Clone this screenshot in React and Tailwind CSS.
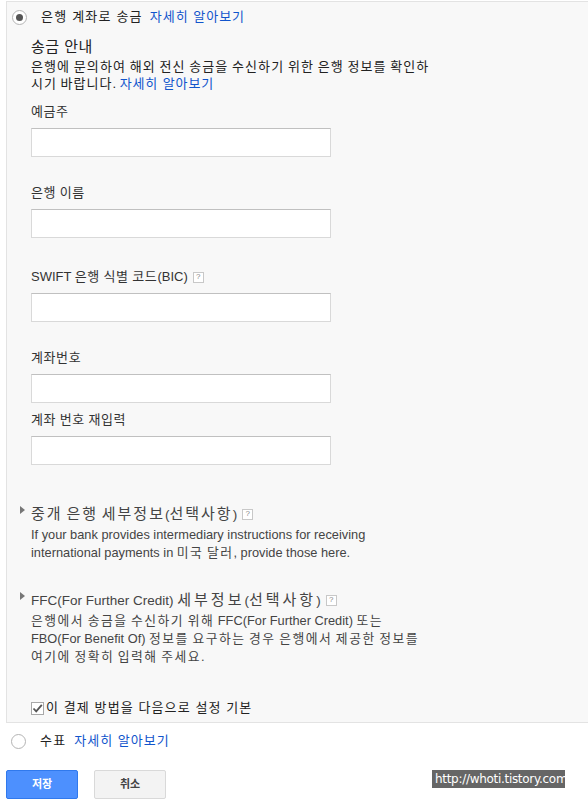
import { useState } from 'react';

const font = "font-['Liberation_Sans','Noto_Sans_CJK_KR',sans-serif]";

// wraps hangul runs so they get the wider spacing of the original font
const Kr = ({ text, cls }) =>
    text.split(/([가-힣]+)/).map((part, i) =>
        /[가-힣]/.test(part) ? <span key={i} className={cls}>{part}</span> : part
    );

const Help = () => (
    <span className="inline-flex items-center justify-center w-[11px] h-[11px] border border-[#c8c8c8] bg-white text-[8px] leading-none text-[#888] ml-[5px]">?</span>
);

const Field = ({ label, help, className = '' }) => (
    <div className={className}>
        <div className="text-[13px] text-[#333] leading-[16px] h-[16px] flex items-center">
            <span><Kr text={label} cls="tracking-[0.6px]" /></span>
            {help && <Help />}
        </div>
        <input type="text" className="mt-[8px] block w-[300px] h-[29px] bg-white border border-[#d9d9d9] border-t-[#c0c0c0] outline-none" />
    </div>
);

const Radio = ({ checked }) => (
    <span className="w-[15px] h-[15px] rounded-full border border-[#b4b4b4] bg-white flex items-center justify-center shrink-0">
        {checked && <span className="w-[7px] h-[7px] rounded-full bg-[#555]" />}
    </span>
);

const Section = ({ title, titleCls, lines, className = '' }) => (
    <div className={className}>
        <div className="flex items-center text-[13.5px] text-[#444] leading-[18px] h-[18px]">
            <span className="w-0 h-0 border-y-[4px] border-y-transparent border-l-[5px] border-l-[#777] -ml-[11px] mr-[6px] -mt-[8px]" />
            <span><Kr text={title} cls={titleCls} /></span>
            <Help />
        </div>
        <div className="mt-[3px] text-[12.8px] text-[#444] leading-[18px]">
            {lines.map((l, i) => (
                <div key={i}><Kr text={l} cls="tracking-[1.5px]" /></div>
            ))}
        </div>
    </div>
);

const App = () => {
    const [isDefault, setIsDefault] = useState(true);

    return (
        <div className={`${font} w-[588px] h-[804px] bg-white relative overflow-hidden`}>
            <div className="ml-[6px] mt-[1px] bg-[#f8f8f8] border-l border-y border-[#e3e3e3] pb-[6px]">
                <div className="flex items-center h-[30px] pl-[5px]">
                    <Radio checked />
                    <span className="ml-[14px] text-[13px] text-[#222] tracking-[1.2px]">은행 계좌로 송금</span>
                    <a className="ml-[7px] text-[13px] text-[#1155cc] tracking-[1px]">자세히 알아보기</a>
                </div>

                <div className="pl-[24px]">
                    <div className="text-[15px] text-[#222] leading-[18px] mt-[6px] tracking-[0.5px]">송금 안내</div>
                    <div className="text-[13px] text-[#222] leading-[17px] mt-[2px] w-[420px]">
                        <div><Kr text="은행에 문의하여 해외 전신 송금을 수신하기 위한 은행 정보를 확인하" cls="tracking-[1.1px]" /></div>
                        <div>
                            <Kr text="시기 바랍니다. " cls="tracking-[1px]" />
                            <a className="text-[#1155cc] tracking-[0.9px]">자세히 알아보기</a>
                        </div>
                    </div>

                    <Field label="예금주" className="mt-[12px]" />
                    <Field label="은행 이름" className="mt-[28px]" />
                    <Field label="SWIFT 은행 식별 코드(BIC)" help className="mt-[31px]" />
                    <Field label="계좌번호" className="mt-[28px]" />
                    <Field label="계좌 번호 재입력" className="mt-[9px]" />

                    <Section
                        title="중개 은행 세부정보(선택사항)"
                        titleCls="text-[15px] tracking-[2px]"
                        className="mt-[40px]"
                        lines={[
                            'If your bank provides intermediary instructions for receiving',
                            'international payments in 미국 달러, provide those here.',
                        ]}
                    />

                    <Section
                        title="FFC(For Further Credit) 세부정보(선택사항)"
                        titleCls="text-[15px] tracking-[3px]"
                        className="mt-[29px]"
                        lines={[
                            '은행에서 송금을 수신하기 위해 FFC(For Further Credit) 또는',
                            'FBO(For Benefit Of) 정보를 요구하는 경우 은행에서 제공한 정보를',
                            '여기에 정확히 입력해 주세요.',
                        ]}
                    />

                    <label className="flex items-center h-[16px] mt-[34px] text-[13px] text-[#222] cursor-pointer">
                        <span
                            onClick={() => setIsDefault(!isDefault)}
                            className="w-[13px] h-[13px] border border-[#a8a8a8] bg-white flex items-center justify-center mr-[2px]"
                        >
                            {isDefault && (
                                <svg width="11" height="11" viewBox="0 0 11 11">
                                    <path d="M1.5 5.5 L4.2 8.4 L9.8 1.8" fill="none" stroke="#555" strokeWidth="1.8" />
                                </svg>
                            )}
                        </span>
                        <span className="tracking-[1.1px]">이 결제 방법을 다음으로 설정 기본</span>
                    </label>
                </div>
            </div>

            <div className="flex items-center h-[30px] pl-[11px] mt-[3px]">
                <Radio />
                <span className="ml-[14px] text-[13px] text-[#222] tracking-[1.2px]">수표</span>
                <a className="ml-[8px] text-[13px] text-[#1155cc] tracking-[1px]">자세히 알아보기</a>
            </div>

            <div className="flex items-center gap-[16px] pl-[6px] mt-[14px]">
                <button className="w-[72px] h-[29px] rounded-[2px] bg-[#4d90fe] border border-[#3079ed] text-white text-[11px] font-bold">
                    저장
                </button>
                <button className="w-[72px] h-[29px] rounded-[2px] bg-[#f3f3f3] border border-[#d9d9d9] text-[#444] text-[11px] font-bold">
                    취소
                </button>
            </div>

            <div className="absolute left-[432px] top-[770px] w-[133px] h-[18px] bg-[#666] text-white text-[12px] leading-[18px] pl-[3px] font-['DejaVu_Sans',sans-serif] tracking-[-0.3px]">
                http://whoti.tistory.com
            </div>
        </div>
    );
};

export default App;
